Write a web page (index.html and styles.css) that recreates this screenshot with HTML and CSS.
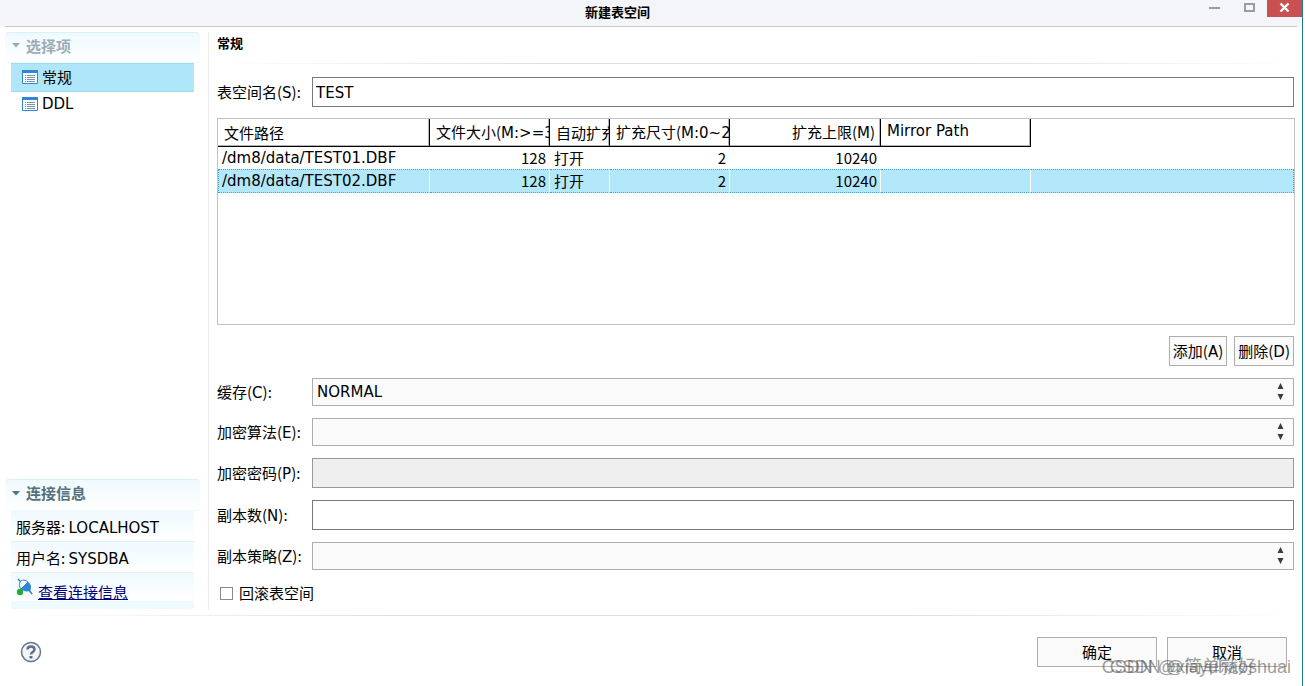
FILE: index.html
```html
<!DOCTYPE html>
<html lang="zh-CN">
<head>
<meta charset="utf-8">
<title>新建表空间</title>
<link rel="stylesheet" href="styles.css">
</head>
<body>
<div class="dialog">
  <header class="titlebar">
    <h1 class="title">新建表空间</h1>
    <div class="window-controls">
      <button class="win-btn" aria-label="最小化"><svg width="13" height="11"><path d="M1 6h11" stroke="#9b9ca0" stroke-width="2"/></svg></button>
      <button class="win-btn" aria-label="最大化"><svg width="13" height="11"><path d="M2 2h9v7H2z" fill="none" stroke="#9b9ca0" stroke-width="2"/></svg></button>
      <button class="win-btn close" aria-label="关闭"><svg width="11" height="11"><path d="M1.500 1.500l8 8M9.500 1.500l-8 8" stroke="#fff" stroke-width="2.400"/></svg></button>
    </div>
  </header>

  <div class="body">
    <aside class="sidebar">
      <section>
        <h2 class="section-head muted"><svg width="8" height="5"><path d="M0 0h8L4 4.500z" fill="currentColor"/></svg>选择项</h2>
        <nav class="nav">
          <a class="nav-item selected" href="#general"><svg width="16" height="14"><path d="M.5 .5h15v13H.5z" fill="#fff" stroke="#2f86d6"/><path d="M0 0h16v3H0z" fill="#2f86d6"/><path d="M3 5.500h1M5 5.500h8M3 7.500h1M5 7.500h8M3 9.500h1M5 9.500h8M3 11.500h1M5 11.500h8" stroke="#7b93ad"/></svg>常规</a>
          <a class="nav-item" href="#ddl"><svg width="16" height="14"><path d="M.5 .5h15v13H.5z" fill="#fff" stroke="#2f86d6"/><path d="M0 0h16v3H0z" fill="#2f86d6"/><path d="M3 5.500h1M5 5.500h8M3 7.500h1M5 7.500h8M3 9.500h1M5 9.500h8M3 11.500h1M5 11.500h8" stroke="#7b93ad"/></svg><span class="latin">DDL</span></a>
        </nav>
      </section>
      <section>
        <h2 class="section-head"><svg width="8" height="5"><path d="M0 0h8L4 4.500z" fill="currentColor"/></svg>连接信息</h2>
        <div class="info">
          <p class="info-row">服务器: <span class="latin">LOCALHOST</span></p>
          <p class="info-row">用户名: <span class="latin">SYSDBA</span></p>
          <p class="info-row link-row">
            <svg width="17" height="18"><path d="M2 1l3 3" stroke="#2f86d6" stroke-width="1.500"/><path d="M4 4c2-3 6-2 8 0L5 11C3 9 3 6 4 4z" fill="#f4faff" stroke="#2f86d6"/><path d="M12 4c3 2 4 5 2 9-4 1-7 0-9-2z" fill="#2f86d6"/><path d="M13 12l3 4" stroke="#2f86d6" stroke-width="1.500"/><circle cx="4" cy="14" r="3.200" fill="#23ab37"/></svg>
            <a href="#connection">查看连接信息</a>
          </p>
          <div class="info-tail"></div>
        </div>
      </section>
    </aside>

    <main class="main">
      <h2 class="page-title">常规</h2>
      <form class="form" id="tablespace">
        <div class="field">
          <label for="name">表空间名(<span class="latin">S</span>):</label>
          <input class="text latin" id="name" type="text" value="TEST">
        </div>

        <div class="table-box">
          <table class="files">
            <colgroup><col class="c-path"><col class="c-size"><col class="c-auto"><col class="c-size"><col class="c-max"><col class="c-mirror"><col></colgroup>
            <thead>
              <tr><th>文件路径</th><th>文件大小(<span class="latin">M:&gt;=32</span>)</th><th>自动扩充</th><th>扩充尺寸(<span class="latin">M:0~2048</span>)</th><th class="num">扩充上限(<span class="latin">M</span>)</th><th class="latin">Mirror Path</th><td></td></tr>
            </thead>
            <tbody>
              <tr><td class="latin">/dm8/data/TEST01.DBF</td><td class="num">128</td><td>打开</td><td class="num">2</td><td class="num">10240</td><td></td><td></td></tr>
              <tr class="selected"><td class="latin">/dm8/data/TEST02.DBF</td><td class="num">128</td><td>打开</td><td class="num">2</td><td class="num">10240</td><td></td><td></td></tr>
            </tbody>
          </table>
        </div>

        <div class="actions">
          <button type="button" class="btn">添加(<span class="latin">A</span>)</button>
          <button type="button" class="btn">删除(<span class="latin">D</span>)</button>
        </div>

        <div class="field">
          <label for="cache">缓存(<span class="latin">C</span>):</label>
          <div class="combo"><select class="latin" id="cache"><option>NORMAL</option></select><svg width="7" height="18"><path d="M3.500 0L6.500 6h-6zM.5 11h6l-3 6z" fill="#3c3c3c"/></svg></div>
        </div>
        <div class="field">
          <label for="algo">加密算法(<span class="latin">E</span>):</label>
          <div class="combo"><select class="latin" id="algo"><option></option></select><svg width="7" height="18"><path d="M3.500 0L6.500 6h-6zM.5 11h6l-3 6z" fill="#3c3c3c"/></svg></div>
        </div>
        <div class="field">
          <label for="pwd">加密密码(<span class="latin">P</span>):</label>
          <input class="text latin" id="pwd" type="password" disabled>
        </div>
        <div class="field">
          <label for="copies">副本数(<span class="latin">N</span>):</label>
          <input class="text latin" id="copies" type="text">
        </div>
        <div class="field">
          <label for="policy">副本策略(<span class="latin">Z</span>):</label>
          <div class="combo"><select class="latin" id="policy"><option></option></select><svg width="7" height="18"><path d="M3.500 0L6.500 6h-6zM.5 11h6l-3 6z" fill="#3c3c3c"/></svg></div>
        </div>
        <label class="check"><input type="checkbox">回滚表空间</label>
      </form>
    </main>
  </div>

  <footer class="footer">
    <button class="help" aria-label="帮助"><svg width="22" height="22"><circle cx="11" cy="11" r="9.500" fill="#f3f4f6" stroke="#66748c" stroke-width="1.500"/><path d="M7.500 8.500c0-4 7-4 7 0 0 2.500-3.500 2.500-3.500 5" fill="none" stroke="#5d6f8c" stroke-width="2.500"/><path d="M9.500 15h3v2.500h-3z" fill="#5d6f8c"/></svg></button>
    <div class="footer-buttons">
      <button class="btn wide">确定</button>
      <button class="btn wide">取消</button>
    </div>
  </footer>
  <div class="watermark"><span>CSDN @xiayuhaoshuai</span><span class="second">CSDN @简单就好</span></div>
</div>
</body>
</html>
```
FILE: styles.css
```css
* { box-sizing: border-box; }

body {
  margin: 0;
  background: #fff;
  color: #000;
  font: 15px/22px "Noto Sans CJK SC", sans-serif;
}

h1, h2, p { margin: 0; font-size: inherit; }
button, input, select { font: inherit; color: inherit; }
.latin { font-family: "DejaVu Sans", "Noto Sans CJK SC", sans-serif; font-size: 15px; }

.dialog {
  position: relative;
  display: flex;
  flex-direction: column;
  min-height: 100vh;
  margin-right: 2px;
  border-right: 1px solid #1f7a96;
}

/* Title bar */
.titlebar {
  display: grid;
  grid-template-columns: 1fr auto 1fr;
  height: 27px;
  background: linear-gradient(#c9cacc, #c9cacc) 5px 100% / calc(100% - 10px) 1px no-repeat #f4f5f8;
}
.title {
  grid-column: 2;
  margin-right: 67px;
  font-size: 13px;
  font-weight: 700;
  line-height: 24px;
}
.window-controls { display: flex; justify-content: flex-end; }
.win-btn {
  display: flex;
  justify-content: center;
  width: 35px;
  height: 17px;
  padding: 2px 0 0;
  border: 0;
  background: none;
}
.win-btn.close { background: #c94f50; }

/* Layout */
.body { display: flex; flex: 1; padding: 5px 5px 6px; }
.sidebar {
  display: flex;
  flex: 0 0 195px;
  flex-direction: column;
  justify-content: space-between;
}
.main {
  flex: 1;
  min-width: 0;
  margin-left: 8px;
  padding: 0 3px 0 8px;
  border-left: 1px solid #ececee;
}

/* Sidebar */
.section-head {
  display: flex;
  align-items: center;
  gap: 6px;
  height: 32px;
  padding: 0 6px 4px;
  border: 1px solid transparent;
  border-top-color: #d8f2fa;
  border-radius: 4px 4px 0 0;
  background: linear-gradient(#effafe, #fff);
  color: #54717d;
  font-weight: 700;
}
.section-head.muted { height: 31px; color: #9badb4; }
.nav, .info { margin: 0 6px; }
.nav-item {
  display: flex;
  align-items: center;
  gap: 4px;
  height: 24px;
  padding: 0 11px;
  color: #000;
  text-decoration: none;
}
.nav-item.selected {
  height: 29px;
  padding-bottom: 1px;
  border: solid #a0dcf0;
  border-width: 1px 0;
  background: #b0e6fa;
}
.info-row {
  height: 31px;
  padding: 5px;
  border-bottom: 1px solid #eceff1;
  background: linear-gradient(#effafe, #fff);
  white-space: nowrap;
}
.link-row { display: flex; gap: 5px; height: 28px; border-bottom: 0; }
.link-row svg { flex: none; }
.link-row a { padding-top: 3px; color: #00007a; }
.info-tail { height: 8px; background: #effafe; }

/* Form */
.page-title {
  height: 32px;
  border-bottom: 1px solid;
  border-image: linear-gradient(90deg, #fff, #e0e0e0 30%, #e0e0e0 70%, #fff) 1;
  font-size: 13px;
  font-weight: 700;
}
.form { display: flex; flex-direction: column; gap: 12px; padding-top: 13px; }
.field { display: grid; grid-template-columns: 95px 1fr; align-items: center; }
.text {
  width: 100%;
  height: 30px;
  padding: 2px 3px 0;
  border: 1px solid #77797a;
  background: #fff;
}
.text:disabled { border-color: #979899; background: #efefef; }
.combo { display: grid; align-items: center; }
.combo select, .combo svg { grid-area: 1 / 1; }
.combo svg { justify-self: end; margin-right: 10px; pointer-events: none; }
.combo select {
  width: 100%;
  height: 28px;
  padding: 0 4px;
  appearance: none;
  border: 1px solid #acadae;
  border-radius: 0;
  background: #fafafa;
}

.table-box {
  height: 207px;
  margin: -1px -1px -1px 0;
  border: 1px solid #c2c2c2;
  overflow: hidden;
}
.files { width: 100%; border-collapse: separate; border-spacing: 0; table-layout: fixed; }
.c-path { width: 212px; }
.c-size { width: 120px; }
.c-auto { width: 60px; }
.c-max { width: 151px; }
.c-mirror { width: 150px; }
.files th, .files td { overflow: hidden; padding: 0 3px; text-align: left; white-space: nowrap; }
.files th {
  height: 28px;
  padding: 0 5px 0 6px;
  border: solid #000;
  border-width: 0 1px 1px 0;
  box-shadow: inset -1px -1px #b5b5b5;
  font-weight: 400;
  text-overflow: clip;
}
.files th.latin { padding-bottom: 4px; }
.files tbody td { height: 22px; padding-left: 4px; border-right: 1px solid transparent; }
.files .selected td {
  height: 24px;
  border-top: 1px dotted #35a9d4;
  border-bottom: 1px dotted #35a9d4;
  border-right: 1px solid #fff;
  background: #b3e7fa;
}
.files .selected td:first-child { border-left: 1px dotted #35a9d4; padding-left: 3px; }
.files .selected td:last-child { border-right: 1px dotted #35a9d4; }
.files .num { text-align: right; }

.actions { display: flex; justify-content: flex-end; gap: 7px; }
.btn {
  height: 30px;
  padding: 0 3px;
  border: 1px solid #acadae;
  background: #fafafa;
  white-space: nowrap;
}
.btn.wide { width: 120px; }
.check { display: flex; align-items: center; gap: 6px; padding-left: 3px; }
.check input {
  width: 13px;
  height: 13px;
  margin: 0;
  appearance: none;
  border: 1px solid #8a8a8a;
  background: #fff;
}

/* Footer */
.footer {
  display: flex;
  align-items: center;
  justify-content: space-between;
  height: 71px;
  margin: 0 5px;
  padding: 2px 10px 0 15px;
  border-top: 1px solid;
  border-image: linear-gradient(90deg, #fff, #e0e0e0 30%, #e0e0e0 70%, #fff) 1;
}
.footer-buttons { display: flex; gap: 10px; }
.help { display: flex; padding: 0; border: 0; background: none; }

.watermark {
  position: absolute;
  right: 11px;
  bottom: 7px;
  display: grid;
  color: rgba(90, 90, 90, .6);
  font: 18px/24px "Liberation Sans", "Noto Sans CJK SC", sans-serif;
  pointer-events: none;
}
.watermark span { grid-area: 1 / 1; white-space: nowrap; }
.watermark .second { padding-left: 8px; }
```
